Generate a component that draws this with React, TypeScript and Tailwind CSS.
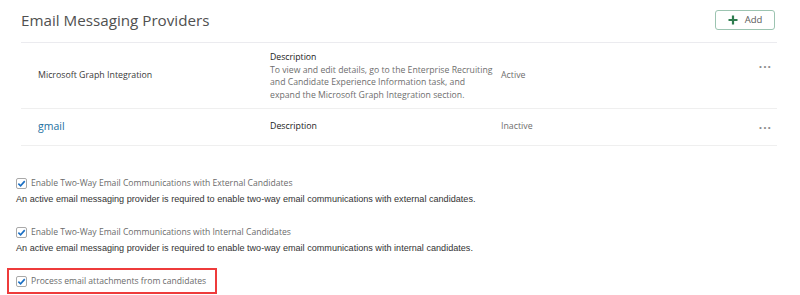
import { ReactNode } from "react";

const SEGOE = "font-['Open_Sans','Noto_Sans',sans-serif]";
const ARIAL = "font-['Liberation_Sans',Arial,sans-serif]";

function Check({ children }: { children: ReactNode }) {
  return (
    <div className="flex items-center h-[14px]">
      <span className="w-[11px] h-[11px] border border-[#a9a9a9] rounded-[2px] bg-white flex items-center justify-center">
        <svg width="9" height="9" viewBox="0 0 10 10">
          <path d="M1.5 5.2 L4 7.6 L8.6 2.4" fill="none" stroke="#1a6fc4" strokeWidth="1.8" />
        </svg>
      </span>
      <span className={`ml-[4px] text-[8.6px] leading-[14px] text-[#6b6b6b] ${SEGOE}`}>{children}</span>
    </div>
  );
}

function Dots() {
  return <span className="text-[#8a8a8a] text-[12px] leading-none tracking-[1px] font-bold">···</span>;
}

export default function App() {
  return (
    <div className="w-[800px] h-[295px] bg-white overflow-hidden">
      {/* header */}
      <div className="ml-[21px] mr-[23px] h-[43px] flex items-center justify-between border-b border-[#ebebef]">
        <h1 className={`text-[15.2px] text-[#505050] ${SEGOE} -mt-[2px]`}>Email Messaging Providers</h1>
        <button className="w-[60px] h-[20px] -mt-[2px] mr-[2px] border border-[#9cc4b1] rounded-[3px] flex items-center justify-center gap-[7px]">
          <svg width="10" height="10" viewBox="0 0 10 10">
            <path d="M5 0.5 V9.5 M0.5 5 H9.5" stroke="#2f7d4f" strokeWidth="2.2" />
          </svg>
          <span className={`text-[9.5px] text-[#5a5a5a] ${SEGOE}`}>Add</span>
        </button>
      </div>

      {/* providers */}
      <div className={`ml-[21px] mr-[23px] ${SEGOE}`}>
        <div className="h-[66px] flex border-b border-[#efefef]">
          <div className="w-[249px] pl-[17px] flex items-center text-[8.8px] text-[#3a3a3a]">
            Microsoft Graph Integration
          </div>
          <div className="w-[231px] pt-[8px] text-[8.7px] leading-[12.5px]">
            <div className="text-[#222]">Description</div>
            <div className="text-[#6e6e6e]">
              To view and edit details, go to the Enterprise Recruiting
              <br />
              and Candidate Experience Information task, and
              <br />
              expand the Microsoft Graph Integration section.
            </div>
          </div>
          <div className="flex-1 flex items-center text-[8.8px] text-[#6e6e6e]">Active</div>
          <div className="pt-[10px] pr-[5px]">
            <Dots />
          </div>
        </div>
        <div className="h-[37px] flex items-center border-b border-[#efefef]">
          <div className="w-[249px] pl-[17px] text-[10.5px] text-[#22709f]">gmail</div>
          <div className="w-[231px] text-[8.8px] text-[#222]">Description</div>
          <div className="flex-1 text-[8.8px] text-[#6e6e6e]">Inactive</div>
          <div className="pr-[5px] -mt-[3px]">
            <Dots />
          </div>
        </div>
      </div>

      {/* settings */}
      <div className="pl-[16px] pt-[30px]">
        <Check>Enable Two-Way Email Communications with External Candidates</Check>
        <p className={`mt-[2px] text-[9.1px] leading-[14px] text-[#333] ${ARIAL}`}>
          An active email messaging provider is required to enable two-way email communications with external candidates.
        </p>
        <div className="mt-[19px]">
          <Check>Enable Two-Way Email Communications with Internal Candidates</Check>
        </div>
        <p className={`mt-[2px] text-[9.1px] leading-[14px] text-[#333] ${ARIAL}`}>
          An active email messaging provider is required to enable two-way email communications with internal candidates.
        </p>
        <div className="mt-[13px] -ml-[9px] w-[210px] h-[26px] border-2 border-[#ee3b3b] pl-[7px] flex items-center">
          <Check>Process email attachments from candidates</Check>
        </div>
      </div>
    </div>
  );
}
